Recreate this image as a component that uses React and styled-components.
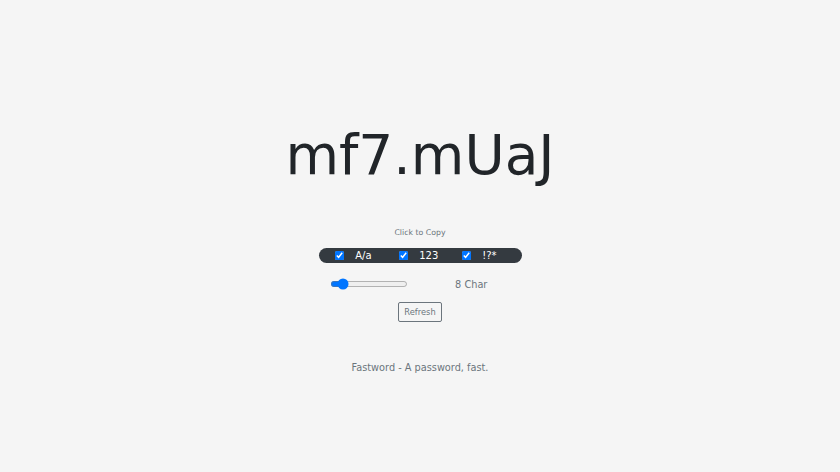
import React, { useState } from "react";
import styled, { createGlobalStyle } from "styled-components";

const Global = createGlobalStyle`
  html, body { margin: 0; padding: 0; background: #f5f5f5; }
  body { font-family: "DejaVu Sans", "Liberation Sans", sans-serif; color: #212529; }
`;

const Page = styled.main`
  display: flex;
  flex-direction: column;
  align-items: center;
  padding-top: 121px;
`;

const Password = styled.h1`
  margin: 0;
  font-size: 55px;
  font-weight: 400;
  line-height: 68px;
  color: #212529;
  cursor: pointer;
`;

const CopyHint = styled.div`
  margin-top: 38px;
  font-size: 7.8px;
  line-height: 12px;
  color: #6c757d;
`;

const Pill = styled.div`
  margin-top: 9px;
  width: 203px;
  height: 15px;
  box-sizing: border-box;
  border-radius: 8px;
  background: #343a40;
  display: grid;
  grid-template-columns: 64px 63px 63px;
  align-items: center;
  padding-left: 16px;
`;

const Option = styled.label`
  display: flex;
  align-items: center;
  gap: 11px;
  color: #ffffff;
  font-size: 10px;
  line-height: 15px;
`;

const Check = styled.input.attrs({ type: "checkbox" })`
  margin: 0;
  width: 13px;
  height: 13px;
  zoom: 0.75;
  accent-color: #0075ff;
`;

const SliderRow = styled.div`
  margin-top: 13px;
  width: 203px;
  display: grid;
  grid-template-columns: 1fr 1fr;
  align-items: center;
  height: 16px;
`;

const Cell = styled.div`
  display: flex;
  justify-content: center;
  align-items: center;
`;

const Range = styled.input.attrs({ type: "range" })`
  margin: 0;
  width: 104px;
  zoom: 0.75;
`;

const Count = styled.span`
  font-size: 9.75px;
  color: #6c757d;
  padding-left: 1px;
`;

const RefreshButton = styled.button`
  margin-top: 10px;
  height: 20px;
  padding: 0 5px;
  font-family: inherit;
  font-size: 8.3px;
  color: #6c757d;
  background: transparent;
  border: 1px solid #6c757d;
  border-radius: 2px;
`;

const Footer = styled.footer`
  margin-top: 39px;
  font-size: 9.75px;
  line-height: 14px;
  color: #6c757d;
`;

export default function App() {
  const [len, setLen] = useState(8);
  return (
    <>
      <Global />
      <Page>
        <Password>mf7.mUaJ</Password>
        <CopyHint>Click to Copy</CopyHint>
        <Pill>
          <Option><Check defaultChecked />A/a</Option>
          <Option><Check defaultChecked />123</Option>
          <Option><Check defaultChecked />!?*</Option>
        </Pill>
        <SliderRow>
          <Cell>
            <Range min={4} max={42} value={len} onChange={(e) => setLen(+e.target.value)} />
          </Cell>
          <Cell><Count>{len} Char</Count></Cell>
        </SliderRow>
        <RefreshButton>Refresh</RefreshButton>
        <Footer>Fastword - A password, fast.</Footer>
      </Page>
    </>
  );
}
